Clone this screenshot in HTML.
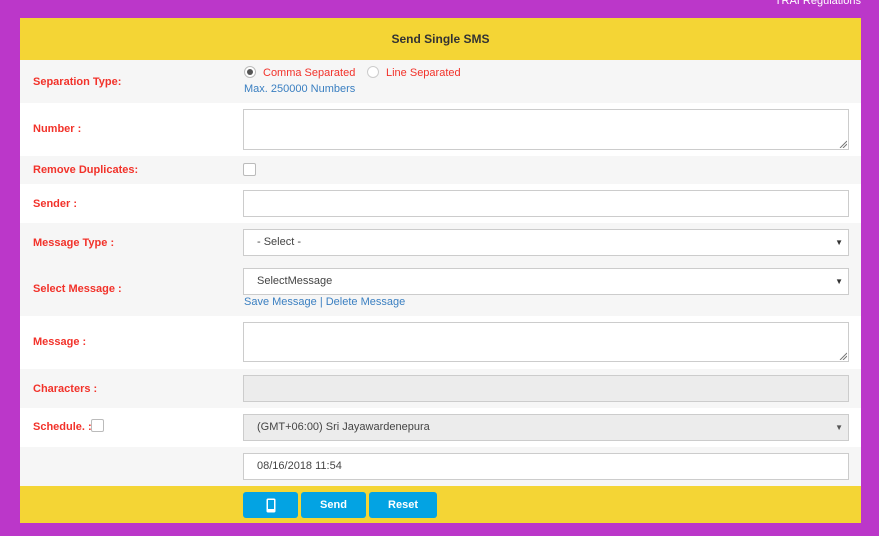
<!DOCTYPE html>
<html><head><style>
*{box-sizing:border-box;margin:0;padding:0}
body{width:879px;height:536px;background:#bb37c9;font-family:"Liberation Sans",sans-serif;position:relative;overflow:hidden}
.trai{position:absolute;right:18px;top:-5px;color:#fff;font-size:11px}
.panel{position:absolute;left:20px;top:18px;width:841px;height:505px;background:#fff}
.hdr{position:absolute;left:0;top:0;width:841px;height:42px;background:#f4d535;text-align:center;line-height:42px;font-weight:bold;font-size:12px;color:#333}
.row{position:absolute;left:0;width:841px}
.g{background:#f6f6f6}
.lbl{position:absolute;left:13px;color:#f2322a;font-weight:bold;font-size:11px}
.inp{position:absolute;left:223px;width:606px;border:1px solid #ccc;background:#fff;font-size:11px;color:#444;padding-left:13px}
.arr{position:absolute;right:5px;font-size:8px;color:#333}
.blue{color:#3a7fc1;font-size:11px;position:absolute;left:224px}
.foot{position:absolute;left:0;top:468px;width:841px;height:37px;background:#f4d535}
.btn{position:absolute;top:6px;height:26px;background:#03a3e3;border-radius:3px;color:#fff;font-weight:bold;font-size:11px;text-align:center;line-height:26px}
.cb{position:absolute;width:13px;height:13px;border:1px solid #bbb;border-radius:2px;background:#fff}
.grip{position:absolute;right:1px;bottom:1px}
</style></head><body>
<div class="trai">TRAI Regulations</div>
<div class="panel">
<div class="hdr">Send Single SMS</div>
<div class="row g" style="top:42px;height:43px">
 <div class="lbl" style="top:16px">Separation Type:</div>
 <div style="position:absolute;left:224px;top:6px;width:12px;height:12px;border-radius:50%;border:1px solid #bbb;background:#fff"><div style="position:absolute;left:2px;top:2px;width:6px;height:6px;border-radius:50%;background:#555"></div></div>
 <div style="position:absolute;left:243px;top:7px;font-size:11px;color:#f2322a">Comma Separated</div>
 <div style="position:absolute;left:347px;top:6px;width:12px;height:12px;border-radius:50%;border:1px solid #ccc;background:#fff"></div>
 <div style="position:absolute;left:366px;top:7px;font-size:11px;color:#f2322a">Line Separated</div>
 <div class="blue" style="top:23px">Max. 250000 Numbers</div>
</div>
<div class="row" style="top:85px;height:53px">
 <div class="lbl" style="top:20px">Number :</div>
 <div class="inp" style="top:6px;height:41px"><svg class="grip" width="8" height="8"><path d="M1 8L8 1M4 8L8 4" stroke="#777" stroke-width="1"/></svg></div>
</div>
<div class="row g" style="top:138px;height:28px">
 <div class="lbl" style="top:8px">Remove Duplicates:</div>
 <div class="cb" style="left:223px;top:7px"></div>
</div>
<div class="row" style="top:166px;height:39px">
 <div class="lbl" style="top:14px">Sender :</div>
 <div class="inp" style="top:6px;height:27px"></div>
</div>
<div class="row g" style="top:205px;height:93px">
 <div class="lbl" style="top:14px">Message Type :</div>
 <div class="inp" style="top:6px;height:27px;line-height:25px">- Select -<span class="arr">▼</span></div>
 <div class="lbl" style="top:60px">Select Message :</div>
 <div class="inp" style="top:45px;height:27px;line-height:25px">SelectMessage<span class="arr">▼</span></div>
 <div class="blue" style="top:73px">Save Message | Delete Message</div>
</div>
<div class="row" style="top:298px;height:53px">
 <div class="lbl" style="top:20px">Message :</div>
 <div class="inp" style="top:6px;height:40px"><svg class="grip" width="8" height="8"><path d="M1 8L8 1M4 8L8 4" stroke="#777" stroke-width="1"/></svg></div>
</div>
<div class="row g" style="top:351px;height:39px">
 <div class="lbl" style="top:14px">Characters :</div>
 <div class="inp" style="top:6px;height:27px;background:#ececec"></div>
</div>
<div class="row" style="top:390px;height:39px">
 <div class="lbl" style="top:13px">Schedule. :</div>
 <div class="cb" style="left:71px;top:11px"></div>
 <div class="inp" style="top:6px;height:27px;line-height:25px;background:#ececec">(GMT+06:00) Sri Jayawardenepura<span class="arr" style="color:#555">▼</span></div>
</div>
<div class="row g" style="top:429px;height:39px">
 <div class="inp" style="top:6px;height:27px;line-height:25px">08/16/2018 11:54</div>
</div>
<div class="foot">
 <div class="btn" style="left:223px;width:55px"><svg width="10" height="15" viewBox="0 0 10 15" style="vertical-align:middle"><rect x="0.5" y="0.5" width="9" height="14" rx="1.5" fill="#fff"/><rect x="2" y="2" width="6" height="9" fill="#03a3e3"/></svg></div>
 <div class="btn" style="left:281px;width:65px">Send</div>
 <div class="btn" style="left:349px;width:68px">Reset</div>
</div>
</div>
</body></html>
